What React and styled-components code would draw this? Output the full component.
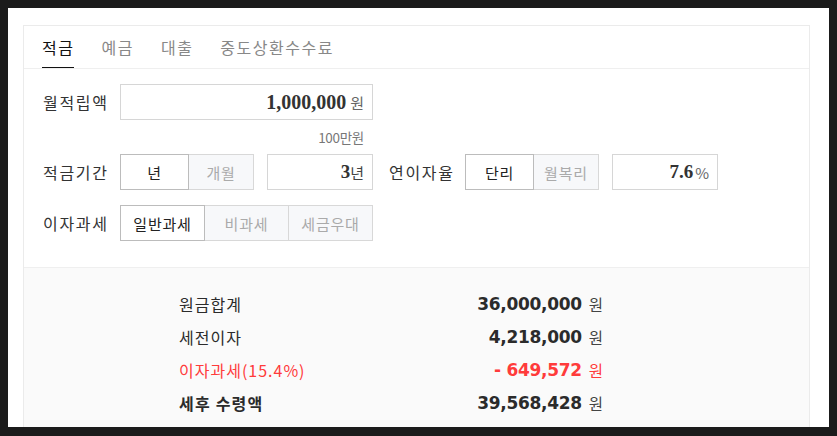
import React, { useState } from "react";
import styled, { createGlobalStyle } from "styled-components";

const Global = createGlobalStyle`
  html, body { margin: 0; padding: 0; background: #1b1b1b; }
  body { font-family: "Noto Sans CJK KR", "Noto Sans", sans-serif; }
  * { box-sizing: border-box; }
`;

const Page = styled.div`
  margin: 8px;
  height: 419px;
  width: 821px;
  background: #fff;
  padding: 17px 19px 0 15px;
  overflow: hidden;
`;

const Card = styled.div`
  border: 1px solid #ebebeb;
  border-bottom: none;
  height: 420px;
  display: flex;
  flex-direction: column;
`;

const TabBar = styled.div`
  display: flex;
  padding-left: 18px;
  border-bottom: 1px solid #efefef;
`;

const Tab = styled.div`
  font-size: 16px;
  line-height: 22px;
  letter-spacing: 1.5px;
  padding: 10px 0 9px;
  margin-right: 27px;
  color: ${(p) => (p.$active ? "#111" : "#888")};
  border-bottom: 1px solid ${(p) => (p.$active ? "#111" : "transparent")};
  cursor: pointer;
`;

const Form = styled.div`
  padding: 15px 0 26px 19px;
  display: flex;
  flex-direction: column;
  border-bottom: 1px solid #efefef;
`;

const Row = styled.div`
  display: flex;
  align-items: center;
  height: 36px;
  margin-top: ${(p) => p.$mt || 0}px;
`;

const Label = styled.div`
  width: ${(p) => p.$w || 77}px;
  margin-left: ${(p) => p.$ml || 0}px;
  font-size: 16px;
  letter-spacing: 1.7px;
  color: #333;
  flex-shrink: 0;
`;

const InputBox = styled.div`
  width: ${(p) => p.$w}px;
  height: 36px;
  margin-left: ${(p) => p.$ml || 0}px;
  border: 1px solid #d6d6d6;
  display: flex;
  align-items: center;
  justify-content: flex-end;
  padding-right: ${(p) => p.$pr || 10}px;
  background: #fff;
`;

const Value = styled.span`
  font-family: "Liberation Serif", serif;
  font-weight: 700;
  font-size: ${(p) => p.$size || 20}px;
  color: #333;
`;

const Unit = styled.span`
  font-size: 15px;
  color: ${(p) => p.$c || "#666"};
  margin-left: ${(p) => p.$ml ?? 4}px;
`;

const Helper = styled.div`
  width: 321px;
  text-align: right;
  font-size: 13.5px;
  line-height: 20px;
  color: #777;
  margin-top: 7px;
  letter-spacing: -0.3px;
`;

const Segment = styled.div`
  display: flex;
  height: 36px;
`;

const SegBtn = styled.div`
  width: ${(p) => p.$w}px;
  height: 36px;
  display: flex;
  align-items: center;
  justify-content: center;
  font-size: 15px;
  letter-spacing: 0.8px;
  border: 1px solid ${(p) => (p.$active ? "#bcbcbc" : "#d8d8d8")};
  margin-left: ${(p) => (p.$first ? 0 : -1)}px;
  background: ${(p) => (p.$active ? "#fff" : "#f7f8fa")};
  color: ${(p) => (p.$active ? "#222" : "#aaa")};
  position: relative;
  z-index: ${(p) => (p.$active ? 1 : 0)};
`;

const Results = styled.div`
  flex: 1;
  background: #fafafa;
  padding: 19px 0 0 155px;
`;

const ResultRow = styled.div`
  display: flex;
  justify-content: space-between;
  align-items: center;
  width: 424px;
  height: 33px;
  color: ${(p) => (p.$red ? "#ff3b3b" : "#2b2b2b")};
`;

const ResultLabel = styled.div`
  font-size: 16px;
  font-weight: ${(p) => (p.$bold ? 600 : 400)};
  letter-spacing: ${(p) => (p.$bold ? 1.2 : 1)}px;
`;

const ResultValue = styled.div`
  display: flex;
  align-items: center;
`;

const Num = styled.span`
  font-family: "DejaVu Sans", Verdana, sans-serif;
  font-weight: 700;
  font-size: 17px;
  letter-spacing: -0.3px;
`;

const ResultUnit = styled.span`
  font-size: 15.5px;
  margin-left: 7px;
  color: ${(p) => (p.$red ? "#ff3b3b" : "#444")};
`;

export default function App() {
  const [tab, setTab] = useState(0);
  const tabs = ["적금", "예금", "대출", "중도상환수수료"];
  const results = [
    { label: "원금합계", value: "36,000,000" },
    { label: "세전이자", value: "4,218,000" },
    { label: "이자과세(15.4%)", value: "- 649,572", red: true },
    { label: "세후 수령액", value: "39,568,428", bold: true },
  ];
  return (
    <>
      <Global />
      <Page>
        <Card>
          <TabBar>
            {tabs.map((t, i) => (
              <Tab key={t} $active={i === tab} onClick={() => setTab(i)}>
                {t}
              </Tab>
            ))}
          </TabBar>
          <Form>
            <Row>
              <Label>월적립액</Label>
              <InputBox $w={253} $pr={8}>
                <Value>1,000,000</Value>
                <Unit $ml={4}>원</Unit>
              </InputBox>
            </Row>
            <Helper>100만원</Helper>
            <Row $mt={7}>
              <Label>적금기간</Label>
              <Segment>
                <SegBtn $w={69} $first $active>년</SegBtn>
                <SegBtn $w={66}>개월</SegBtn>
              </Segment>
              <InputBox $w={106} $ml={13} $pr={8}>
                <Value $size={19}>3</Value>
                <Unit $ml={0} $c="#444">년</Unit>
              </InputBox>
              <Label $w={76} $ml={16}>연이자율</Label>
              <Segment>
                <SegBtn $w={69} $first $active>단리</SegBtn>
                <SegBtn $w={66}>월복리</SegBtn>
              </Segment>
              <InputBox $w={106} $ml={13} $pr={8}>
                <Value $size={19}>7.6</Value>
                <Unit $ml={2}>%</Unit>
              </InputBox>
            </Row>
            <Row $mt={15}>
              <Label>이자과세</Label>
              <Segment>
                <SegBtn $w={85} $first $active>일반과세</SegBtn>
                <SegBtn $w={85}>비과세</SegBtn>
                <SegBtn $w={85}>세금우대</SegBtn>
              </Segment>
            </Row>
          </Form>
          <Results>
            {results.map((r) => (
              <ResultRow key={r.label} $red={r.red}>
                <ResultLabel $bold={r.bold}>{r.label}</ResultLabel>
                <ResultValue>
                  <Num>{r.value}</Num>
                  <ResultUnit $red={r.red}>원</ResultUnit>
                </ResultValue>
              </ResultRow>
            ))}
          </Results>
        </Card>
      </Page>
    </>
  );
}
